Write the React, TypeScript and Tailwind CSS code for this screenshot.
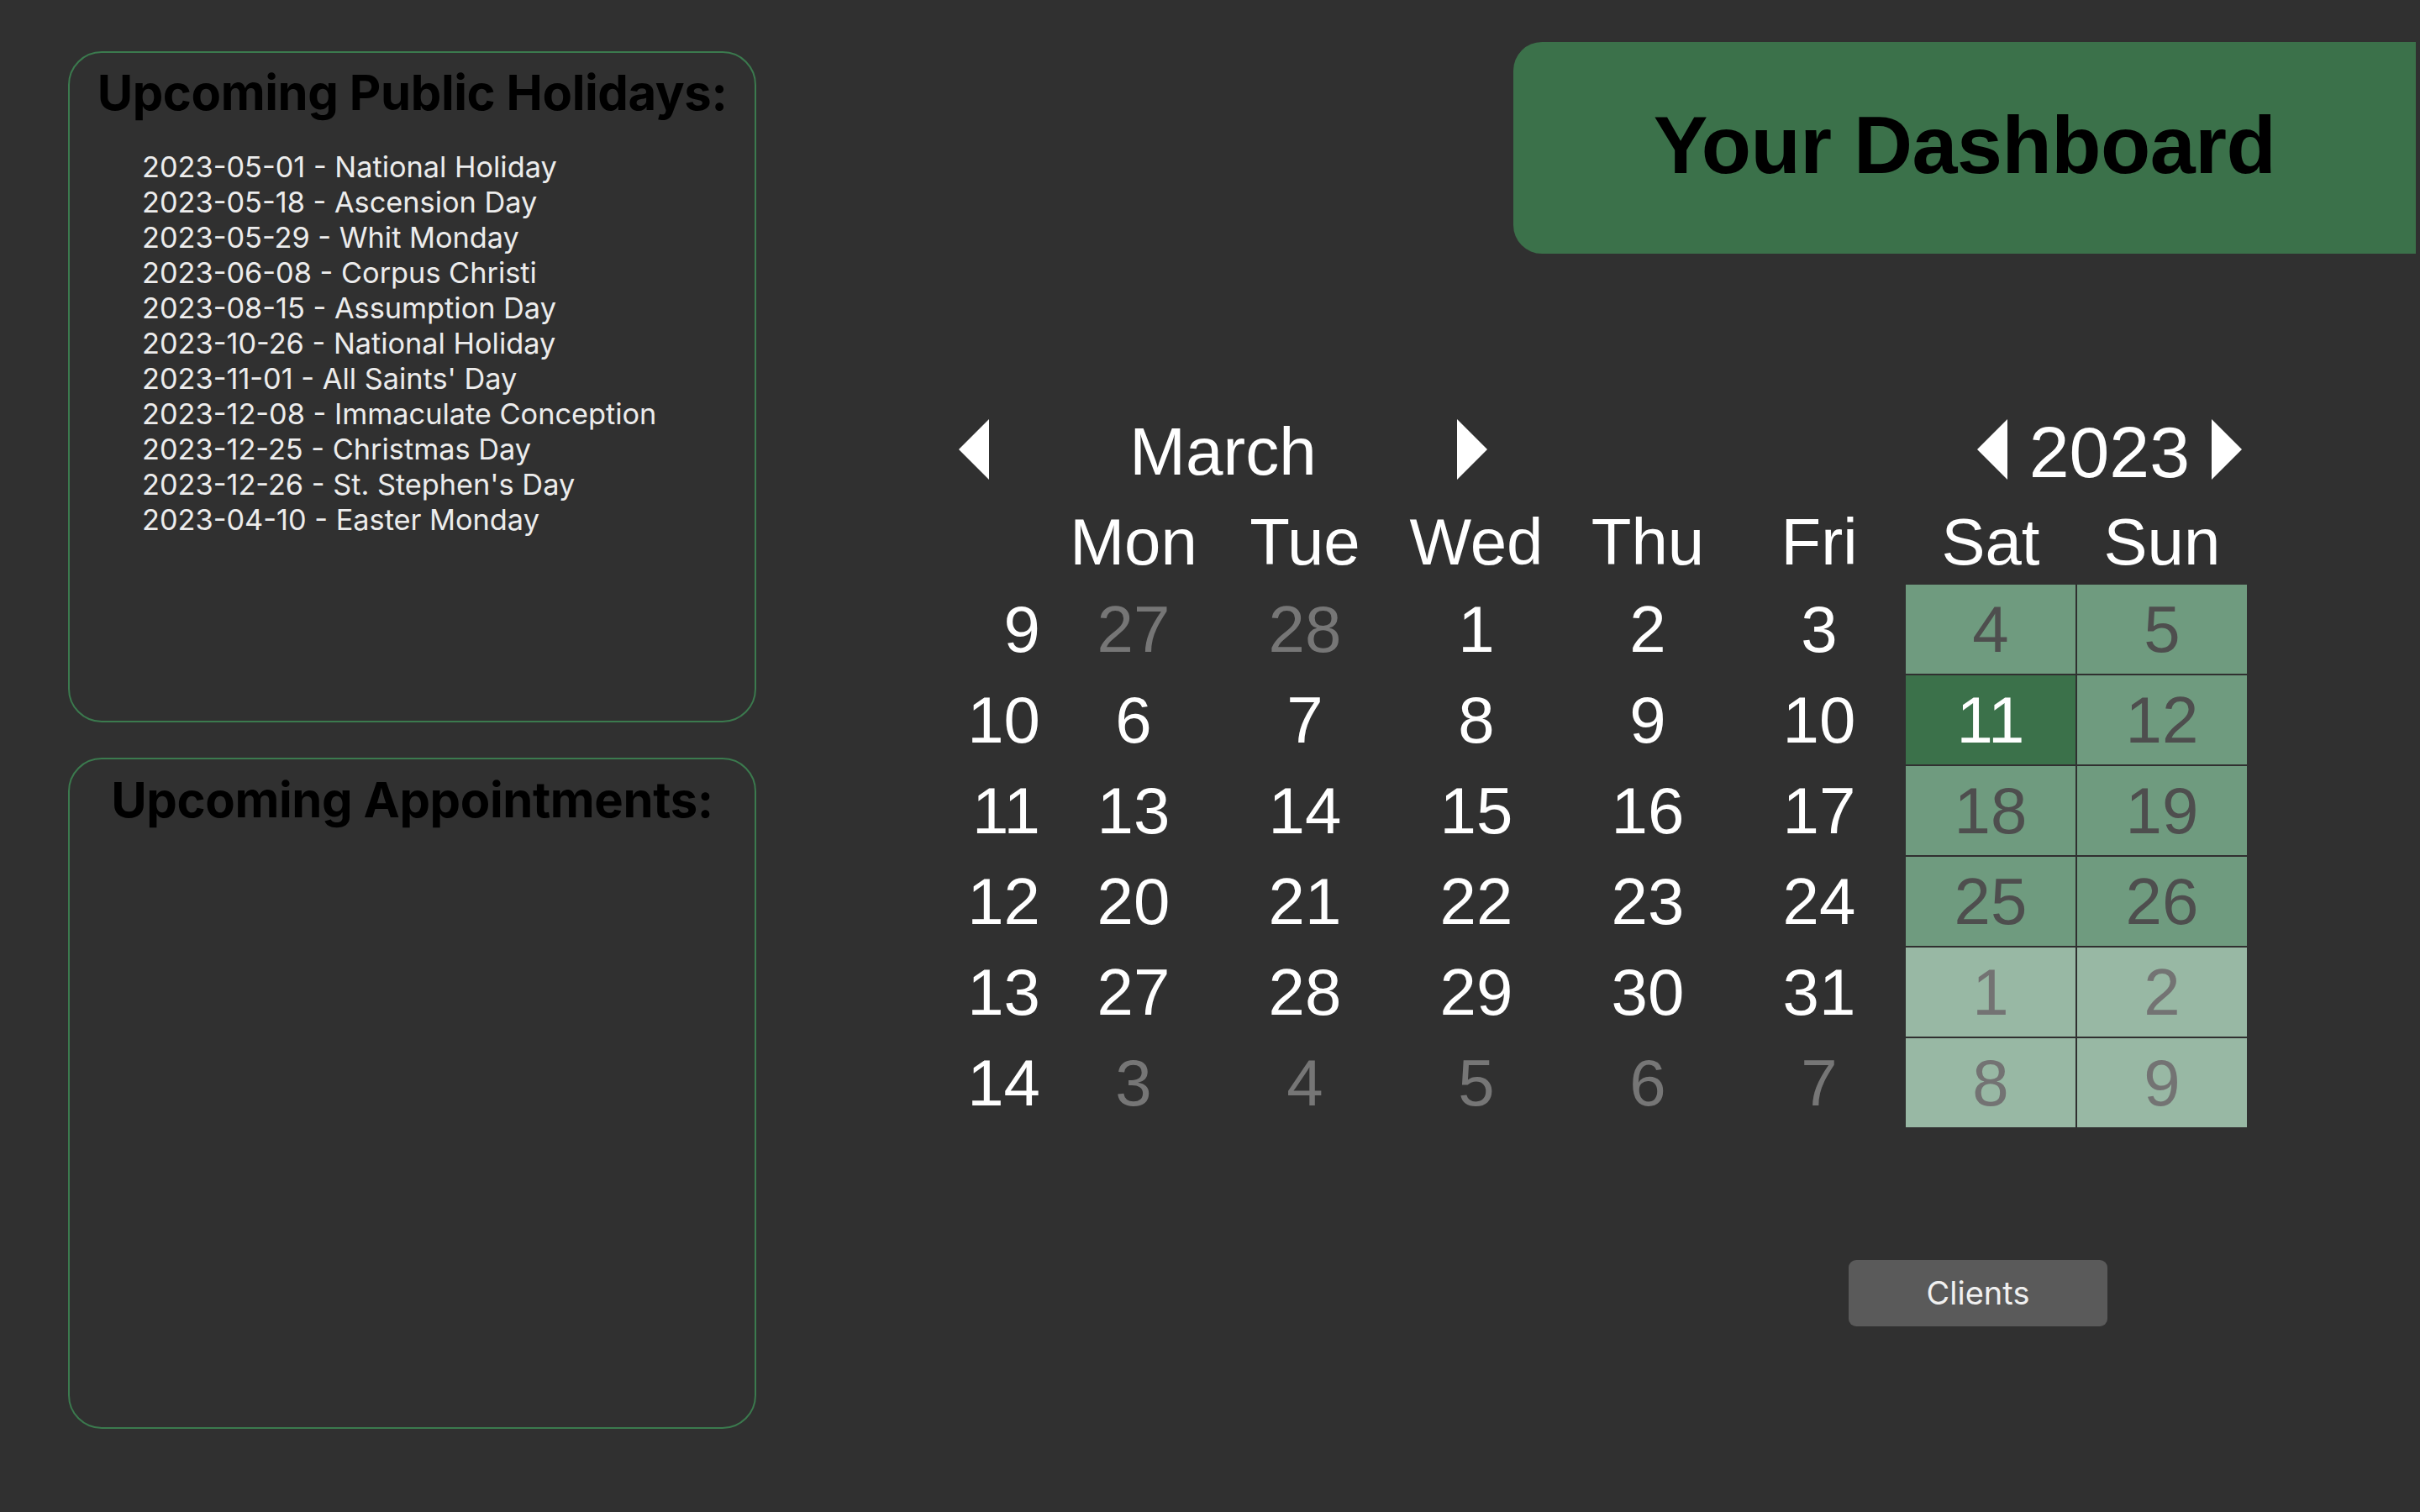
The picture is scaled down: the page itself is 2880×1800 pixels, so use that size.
import React from "react";

const holidays = [
  "2023-05-01 - National Holiday",
  "2023-05-18 - Ascension Day",
  "2023-05-29 - Whit Monday",
  "2023-06-08 - Corpus Christi",
  "2023-08-15 - Assumption Day",
  "2023-10-26 - National Holiday",
  "2023-11-01 - All Saints' Day",
  "2023-12-08 - Immaculate Conception",
  "2023-12-25 - Christmas Day",
  "2023-12-26 - St. Stephen's Day",
  "2023-04-10 - Easter Monday",
];

const dayNames = ["Mon", "Tue", "Wed", "Thu", "Fri", "Sat", "Sun"];

// [day, outside current month]
const weeks: { n: number; days: [number, boolean][] }[] = [
  { n: 9, days: [[27, true], [28, true], [1, false], [2, false], [3, false], [4, false], [5, false]] },
  { n: 10, days: [[6, false], [7, false], [8, false], [9, false], [10, false], [11, false], [12, false]] },
  { n: 11, days: [[13, false], [14, false], [15, false], [16, false], [17, false], [18, false], [19, false]] },
  { n: 12, days: [[20, false], [21, false], [22, false], [23, false], [24, false], [25, false], [26, false]] },
  { n: 13, days: [[27, false], [28, false], [29, false], [30, false], [31, false], [1, true], [2, true]] },
  { n: 14, days: [[3, true], [4, true], [5, true], [6, true], [7, true], [8, true], [9, true]] },
];

const TODAY = 11;

function Arrow({ dir }: { dir: "left" | "right" }) {
  return (
    <svg width="36" height="72" viewBox="0 0 36 72" className="shrink-0">
      <polygon points={dir === "left" ? "36,0 0,36 36,72" : "0,0 36,36 0,72"} fill="#ffffff" />
    </svg>
  );
}

function DayCell({ day, outside, col }: { day: number; outside: boolean; col: number }) {
  const weekend = col >= 5;
  let cls = "h-[106px] flex items-center justify-center ";
  if (!weekend) {
    cls += outside ? "text-[#767676]" : "text-white";
  } else if (!outside && day === TODAY) {
    cls += "bg-[#3b714a] text-white";
  } else if (outside) {
    cls += "bg-[#98b8a4] text-[#737373]";
  } else {
    cls += "bg-[#6f9b7f] text-[#4e4e4e]";
  }
  return <div className={cls}>{day}</div>;
}

function Panel({ title, children, pt }: { title: string; children?: React.ReactNode; pt: string }) {
  return (
    <section className={`h-[799px] w-[819px] rounded-[40px] border-2 border-[#3b7a4e] ${pt}`}>
      <h2 className="text-center text-[58px] font-bold leading-none tracking-[-0.4px] text-black">{title}</h2>
      {children}
    </section>
  );
}

export default function App() {
  return (
    <div
      className="flex h-[1800px] w-[2880px] overflow-hidden bg-[#303030]"
      style={{ fontFamily: "Inter, 'Noto Sans', sans-serif" }}
    >
      <div className="flex w-[900px] shrink-0 flex-col gap-[42px] pl-[81px] pt-[61px]">
        <Panel title="Upcoming Public Holidays:" pt="pt-[18px]">
          <ul className="mt-[39px] pl-[86px] text-[34.3px] leading-[42px] text-[#ececec]">
            {holidays.map((h) => (
              <li key={h}>{h}</li>
            ))}
          </ul>
        </Panel>
        <Panel title="Upcoming Appointments:" pt="pt-[19px]" />
      </div>

      <div className="flex flex-1 flex-col">
        <div className="flex justify-end pr-[5px] pt-[50px]">
          <div className="flex h-[252px] w-[1074px] items-center justify-center rounded-l-[34px] bg-[#3b714a] pb-[8px]">
            <h1
              className="text-[97px] font-bold leading-none tracking-[-0.5px] text-black"
              style={{ fontFamily: "'Liberation Sans', Arial, sans-serif" }}
            >
              Your Dashboard
            </h1>
          </div>
        </div>

        <div
          className="ml-[241px] mt-[197px] w-[1533px] text-[78px] leading-none text-white"
          style={{ fontFamily: "'Liberation Sans', Arial, sans-serif" }}
        >
          <div className="flex h-[72px] items-center justify-between pr-[6px]">
            <div className="flex w-[629px] items-center justify-between">
              <Arrow dir="left" />
              <span className="pt-[6px] text-[80px]">March</span>
              <Arrow dir="right" />
            </div>
            <div className="flex items-center gap-[26px]">
              <Arrow dir="left" />
              <span className="pt-[6px] text-[86px]">2023</span>
              <Arrow dir="right" />
            </div>
          </div>

          <div className="mt-[23px] grid grid-cols-[105px_repeat(7,202px)] gap-[2px]">
            <div className="h-[100px]" />
            {dayNames.map((d) => (
              <div key={d} className="flex h-[100px] items-center justify-center pt-[2px]">
                {d}
              </div>
            ))}
            {weeks.map((w) => (
              <React.Fragment key={w.n}>
                <div className="flex h-[106px] items-center justify-end pr-[8px]">{w.n}</div>
                {w.days.map(([d, outside], i) => (
                  <DayCell key={i} day={d} outside={outside} col={i} />
                ))}
              </React.Fragment>
            ))}
          </div>
        </div>

        <div className="ml-[1300px] mt-[158px]">
          <button className="flex h-[79px] w-[308px] items-center justify-center rounded-[9px] bg-[#5a5a5a] text-[38px] text-[#f0f0f0]">
            Clients
          </button>
        </div>
      </div>
    </div>
  );
}
